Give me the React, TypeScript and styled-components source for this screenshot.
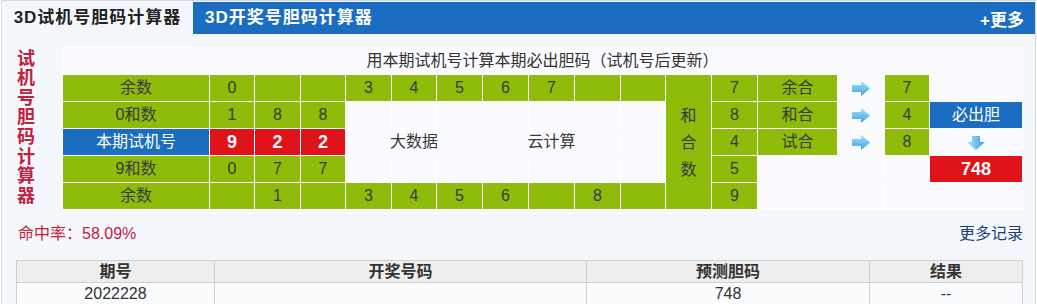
import React from "react";
import styled, { createGlobalStyle } from "styled-components";

const Global = createGlobalStyle`
  html, body { margin: 0; padding: 0; background: #ffffff; }
  body { font-family: "Liberation Sans", "Noto Sans CJK SC", sans-serif; color: #333; }
`;

const Panel = styled.div`
  box-sizing: border-box;
  width: 1035px;
  margin-left: 1px;
  border: 1px solid #d3dce6;
  background: #f4f8fc;
  min-height: 340px;
`;

const Header = styled.div`
  display: flex;
  height: 32px;
  margin-top: 1px;
  background: #1a6dc1;
`;

const Tab = styled.div<{ $active?: boolean }>`
  display: flex;
  align-items: center;
  font-size: 17px;
  font-weight: bold;
  letter-spacing: 1px;
  line-height: 32px;
  ${(p) =>
    p.$active
      ? `width: 191px; justify-content: center; background: #f4f8fc; color: #222;`
      : `padding-left: 12px; color: #fff;`}
`;

const More = styled.a`
  margin-left: auto;
  padding-right: 11px;
  display: flex;
  align-items: center;
  color: #fff;
  font-size: 17px;
  font-weight: bold;
  text-decoration: none;
`;

const Body = styled.div`
  padding: 13px 12px 0 15px;
`;

const CalcRow = styled.div`
  display: flex;
  align-items: center;
`;

const SideLabel = styled.div`
  width: 45px;
  display: flex;
  flex-direction: column;
  color: #c3213d;
  font-size: 18px;
  font-weight: bold;
  line-height: 19.6px;
  margin-top: -1px;
`;

const Grid = styled.table`
  width: 959px;
  table-layout: fixed;
  border-collapse: collapse;
  background: #f9fbfe;
`;

type Tone = "green" | "blue" | "red" | "light";

const toneBg: Record<Tone, string> = {
  green: "#8fbb0b",
  blue: "#1a6dc1",
  red: "#e0121a",
  light: "transparent",
};

const Cell = styled.td<{ $tone?: Tone; $bold?: boolean; $big?: boolean }>`
  height: 26px;
  padding: 0;
  border: 1px solid #ffffff;
  text-align: center;
  vertical-align: middle;
  font-size: ${(p) => (p.$big ? "18px" : "16px")};
  line-height: 20px;
  font-weight: ${(p) => (p.$bold ? "bold" : "normal")};
  background: ${(p) => toneBg[p.$tone ?? "light"]};
  color: ${(p) => (p.$tone === "blue" || p.$tone === "red" ? "#fff" : "#3a3a3a")};
`;

const TitleCell = styled.td`
  height: 26px;
  padding: 0;
  border: 1px solid #ffffff;
  text-align: center;
  font-size: 16px;
  line-height: 20px;
  color: #333;
`;

const StackText = styled.div`
  display: flex;
  flex-direction: column;
  line-height: 27px;
`;

const StatsRow = styled.div`
  display: flex;
  justify-content: space-between;
  align-items: center;
  margin-top: 14px;
  font-size: 16px;
  line-height: 20px;
`;

const HitRate = styled.span`
  color: #c3213d;
  margin-left: 1px;
`;

const MoreLink = styled.a`
  color: #1d3f78;
  text-decoration: none;
`;

const History = styled.table`
  width: 1006px;
  margin-top: 16px;
  margin-left: -1px;
  table-layout: fixed;
  border-collapse: collapse;
  font-size: 16px;
`;

const HCell = styled.th`
  height: 21px;
  padding: 0;
  border: 1px solid #cfcfcf;
  background: #eeeeee;
  color: #333;
  font-weight: bold;
  line-height: 20px;
`;

const DCell = styled.td`
  height: 21px;
  padding: 0;
  border: 1px solid #cfcfcf;
  background: #fafcfe;
  color: #333;
  text-align: center;
  line-height: 20px;
`;

const IconBox = styled.span`
  display: inline-flex;
  vertical-align: middle;
`;

const RightArrow = () => (
  <IconBox>
    <svg width="18" height="15" viewBox="0 0 18 15">
      <defs>
        <linearGradient id="ra" x1="0" y1="0" x2="0" y2="1">
          <stop offset="0" stopColor="#a6e2fb" />
          <stop offset="1" stopColor="#3b9fe0" />
        </linearGradient>
      </defs>
      <path d="M0 4 H9 V0 L18 7.5 L9 15 V11 H0 Z" fill="url(#ra)" />
    </svg>
  </IconBox>
);

const DownArrow = () => (
  <IconBox>
    <svg width="18" height="14" viewBox="0 0 18 14">
      <defs>
        <linearGradient id="da" x1="0" y1="0" x2="1" y2="0">
          <stop offset="0" stopColor="#a6e2fb" />
          <stop offset="1" stopColor="#3b9fe0" />
        </linearGradient>
      </defs>
      <path d="M5 0 H13 V6 H18 L9 14 L0 6 H5 Z" fill="url(#da)" />
    </svg>
  </IconBox>
);

const colWidths = [147, 45, 46, 45, 46, 45, 46, 46, 46, 46, 45, 46, 46, 80, 47, 45, 93];

type C = { v?: string; t?: Tone };
const g = (v = ""): C => ({ v, t: "green" });
const l = (): C => ({ t: "light" });

const row1Mid: C[] = [g("0"), g(), g(), g("3"), g("4"), g("5"), g("6"), g("7"), g(), g()];
const row2Mid: C[] = [g("1"), g("8"), g("8"), l(), l(), l(), l(), l(), l(), l()];
const row4Mid: C[] = [g("0"), g("7"), g("7"), l(), l(), l(), l(), l(), l(), l()];
const row5Mid: C[] = [g(), g("1"), g(), g("3"), g("4"), g("5"), g("6"), g(), g("8"), g()];

const renderMid = (cells: C[]) =>
  cells.map((c, i) => (
    <Cell key={i} $tone={c.t}>
      {c.v}
    </Cell>
  ));

const sideChars = ["试", "机", "号", "胆", "码", "计", "算", "器"];

export default function App() {
  return (
    <>
      <Global />
      <Panel>
        <Header>
          <Tab $active>3D试机号胆码计算器</Tab>
          <Tab>3D开奖号胆码计算器</Tab>
          <More href="#">+更多</More>
        </Header>
        <Body>
          <CalcRow>
            <SideLabel>
              {sideChars.map((ch) => (
                <span key={ch}>{ch}</span>
              ))}
            </SideLabel>
            <Grid>
              <colgroup>
                {colWidths.map((w, i) => (
                  <col key={i} style={{ width: w }} />
                ))}
              </colgroup>
              <tbody>
                <tr>
                  <TitleCell colSpan={17}>用本期试机号计算本期必出胆码（试机号后更新）</TitleCell>
                </tr>
                <tr>
                  <Cell $tone="green">余数</Cell>
                  {renderMid(row1Mid)}
                  <Cell $tone="green" rowSpan={5}>
                    <StackText>
                      <span>和</span>
                      <span>合</span>
                      <span>数</span>
                    </StackText>
                  </Cell>
                  <Cell $tone="green">7</Cell>
                  <Cell $tone="green">余合</Cell>
                  <Cell>
                    <RightArrow />
                  </Cell>
                  <Cell $tone="green">7</Cell>
                  <Cell />
                </tr>
                <tr>
                  <Cell $tone="green">0和数</Cell>
                  {renderMid(row2Mid)}
                  <Cell $tone="green">8</Cell>
                  <Cell $tone="green">和合</Cell>
                  <Cell>
                    <RightArrow />
                  </Cell>
                  <Cell $tone="green">4</Cell>
                  <Cell $tone="blue">必出胆</Cell>
                </tr>
                <tr>
                  <Cell $tone="blue">本期试机号</Cell>
                  <Cell $tone="red" $bold $big>9</Cell>
                  <Cell $tone="red" $bold $big>2</Cell>
                  <Cell $tone="red" $bold $big>2</Cell>
                  <Cell colSpan={3}>大数据</Cell>
                  <Cell colSpan={3}>云计算</Cell>
                  <Cell />
                  <Cell $tone="green">4</Cell>
                  <Cell $tone="green">试合</Cell>
                  <Cell>
                    <RightArrow />
                  </Cell>
                  <Cell $tone="green">8</Cell>
                  <Cell>
                    <DownArrow />
                  </Cell>
                </tr>
                <tr>
                  <Cell $tone="green">9和数</Cell>
                  {renderMid(row4Mid)}
                  <Cell $tone="green">5</Cell>
                  <Cell />
                  <Cell />
                  <Cell />
                  <Cell $tone="red" $bold $big>748</Cell>
                </tr>
                <tr>
                  <Cell $tone="green">余数</Cell>
                  {renderMid(row5Mid)}
                  <Cell $tone="green">9</Cell>
                  <Cell />
                  <Cell />
                  <Cell />
                  <Cell />
                </tr>
              </tbody>
            </Grid>
          </CalcRow>
          <StatsRow>
            <HitRate>命中率：58.09%</HitRate>
            <MoreLink href="#">更多记录</MoreLink>
          </StatsRow>
          <History>
            <colgroup>
              <col style={{ width: 198 }} />
              <col style={{ width: 372 }} />
              <col style={{ width: 283 }} />
              <col style={{ width: 153 }} />
            </colgroup>
            <thead>
              <tr>
                <HCell>期号</HCell>
                <HCell>开奖号码</HCell>
                <HCell>预测胆码</HCell>
                <HCell>结果</HCell>
              </tr>
            </thead>
            <tbody>
              <tr>
                <DCell>2022228</DCell>
                <DCell></DCell>
                <DCell>748</DCell>
                <DCell>--</DCell>
              </tr>
            </tbody>
          </History>
        </Body>
      </Panel>
    </>
  );
}
